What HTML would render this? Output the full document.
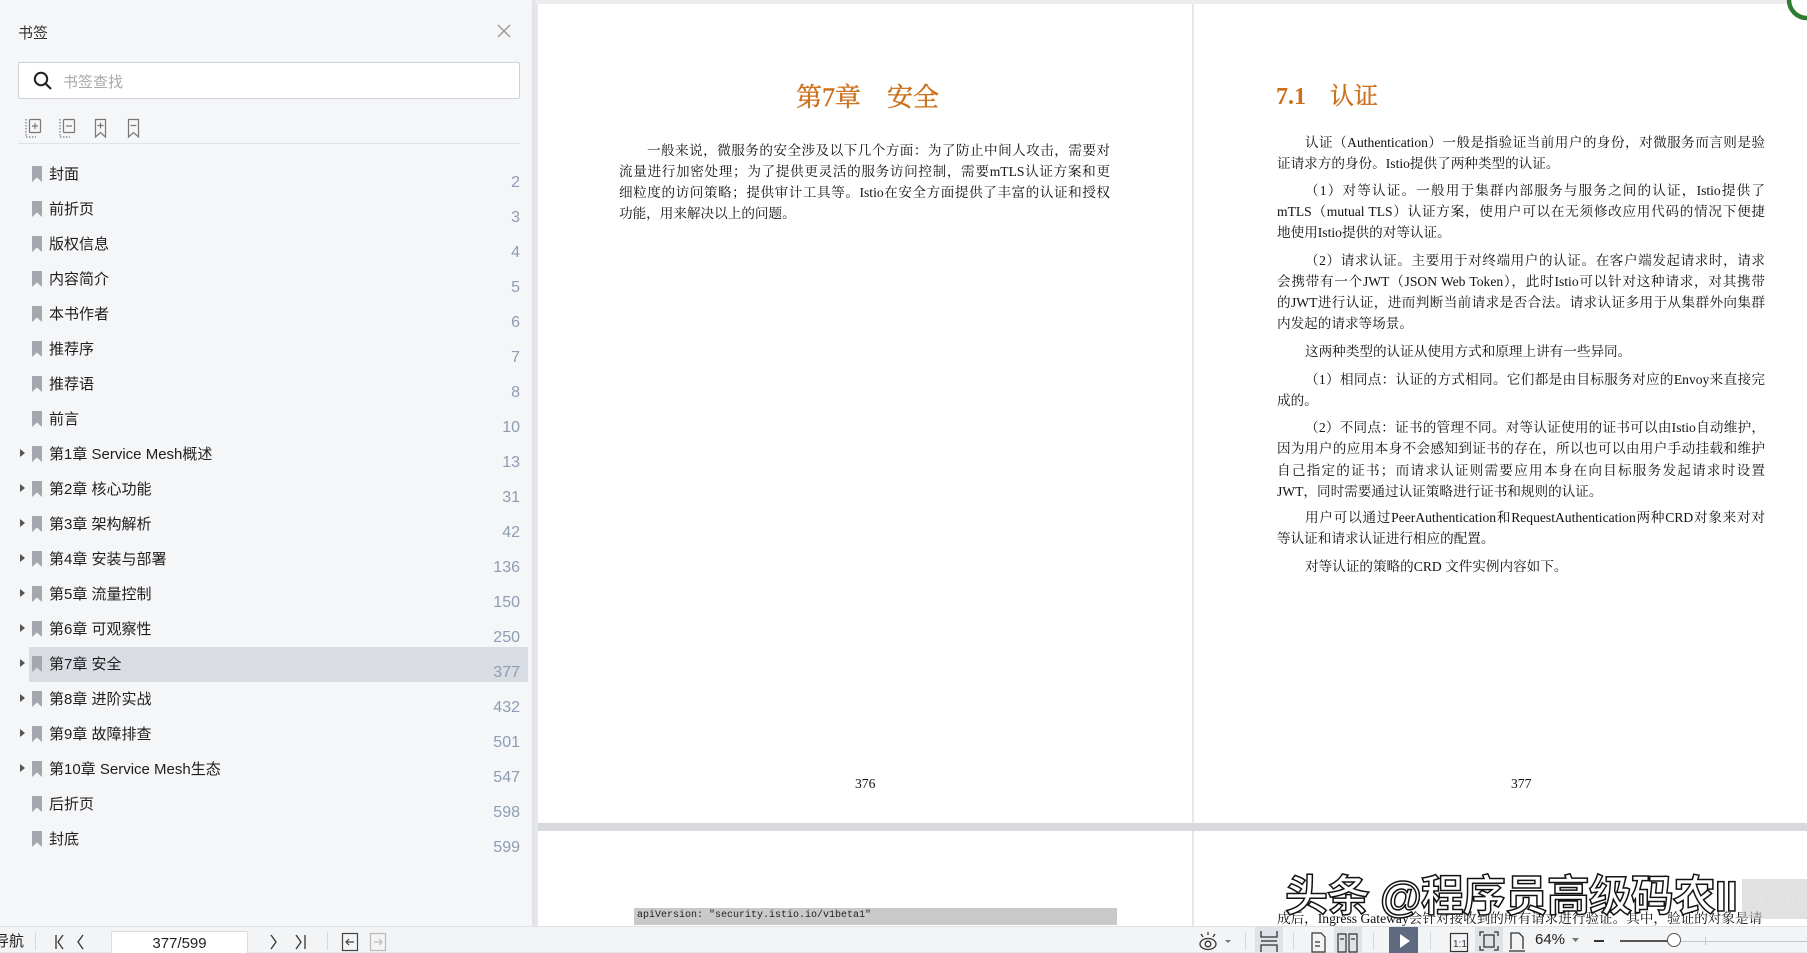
<!DOCTYPE html>
<html><head><meta charset="utf-8">
<style>
*{margin:0;padding:0;box-sizing:border-box}
body{width:1807px;height:952px;overflow:hidden;position:relative;background:#e6e7ea;font-family:"Liberation Sans","Noto Sans CJK SC",sans-serif}
.abs{position:absolute}
#side{left:0;top:0;width:535px;height:926px;background:#f5f6f8;border-right:3px solid #e2e3e6}
.row{position:absolute;left:0;width:530px;height:35px}
.row .t{position:absolute;left:49px;top:7px;font-size:15px;color:#1e1e1e;white-space:nowrap}
.row .n{position:absolute;right:10px;top:18px;font-size:16px;color:#8e9cb3}
.row svg.bm{position:absolute;left:32px;top:10px}
.row .ar{position:absolute;left:20px;top:13px;width:0;height:0;border-left:5px solid #555;border-top:4.5px solid transparent;border-bottom:4.5px solid transparent}
.page{background:#fff;position:absolute}
.ln{position:absolute;font-family:"Liberation Serif","Noto Serif CJK SC",serif;font-size:13.6px;color:#111;white-space:nowrap;line-height:20px;height:20px}
.j{text-align:justify;text-align-last:justify;white-space:normal;overflow:hidden}
#tb{left:0;top:926px;width:1807px;height:26px;background:#f3f4f6;border-top:1px solid #e0e1e4}
.sep{position:absolute;top:5px;width:1px;height:18px;background:#d8d9dc}
.ttl{font-family:'Liberation Serif','Noto Serif CJK SC',serif;color:#cc6f1a;white-space:nowrap;-webkit-text-stroke:0.4px #cc6f1a}
</style></head><body>

<div class="abs" style="left:0;top:0;width:1807px;height:4px;background:#ececee"></div>

<div id="side" class="abs">
  <div class="abs" style="left:18px;top:22px;font-size:15px;color:#333">书签</div>
  <svg class="abs" style="left:497px;top:24px" width="14" height="14"><path d="M1 1L13 13M13 1L1 13" stroke="#999" stroke-width="1.4"/></svg>
  <div class="abs" style="left:18px;top:62px;width:502px;height:37px;background:#fff;border:1px solid #cfd2d6;border-radius:2px"></div>
  <svg class="abs" style="left:33px;top:71px" width="20" height="20"><circle cx="8" cy="8" r="6.2" stroke="#222" stroke-width="2" fill="none"/><path d="M12.5 12.5L18 18" stroke="#222" stroke-width="2.2"/></svg>
  <div class="abs" style="left:63px;top:71px;font-size:15px;color:#aaa">书签查找</div>
  <svg class="abs" style="left:24px;top:117px" width="130" height="22">
    <g stroke="#777" fill="none" stroke-width="1.2">
      <path d="M2 2V20M2 20H12" stroke-dasharray="1.5 1.5"/>
      <rect x="5.5" y="2.5" width="11" height="13" rx="1"/><path d="M8 9H14M11 6V12"/>
      <path d="M36 2V20M36 20H46" stroke-dasharray="1.5 1.5"/>
      <rect x="39.5" y="2.5" width="11" height="13" rx="1"/><path d="M42 9H48"/>
      <path d="M71.5 2.5H81.5V20L76.5 15.5L71.5 20Z"/><path d="M73.5 8.5H79.5M76.5 5.5V11.5"/>
      <path d="M104.5 2.5H114.5V20L109.5 15.5L104.5 20Z"/><path d="M106.5 8.5H112.5"/>
    </g>
  </svg>
  <div class="abs" style="left:18px;top:143px;width:502px;height:1px;background:#e0e2e5"></div>
</div>

<div class="abs" style="left:29px;top:647px;width:499px;height:35px;background:#d9dde3"></div>
<div id="rows"></div>

<div class="page" style="left:538px;top:4px;width:654px;height:819px"></div>
<div class="page" style="left:1194px;top:4px;width:613px;height:819px"></div>
<div class="abs" style="left:538px;top:823px;width:1269px;height:8px;background:#d8d9dc"></div>
<div class="page" style="left:538px;top:831px;width:654px;height:95px"></div>
<div class="page" style="left:1194px;top:831px;width:613px;height:95px"></div>

<div class="abs ttl" style="left:796px;top:77px;font-size:26px">第7章&nbsp;&nbsp;&nbsp;&nbsp;安全</div>
<div class="abs ttl" style="left:1276px;top:76px;font-size:24px;font-weight:bold;-webkit-text-stroke:0">7.1&nbsp;&nbsp;&nbsp;&nbsp;<span style="font-weight:normal;-webkit-text-stroke:0.4px #cc6f1a">认证</span></div>

<div id="lines"></div>

<div class="ln" style="left:855px;top:774px">376</div>
<div class="ln" style="left:1511px;top:774px">377</div>

<div class="abs" style="left:634px;top:908px;width:483px;height:17px;background:#c9c9c9;font-family:'Liberation Mono',monospace;font-size:10px;color:#222;padding:2px 0 0 3px">apiVersion: "security.istio.io/v1beta1"</div>
<div class="ln" style="left:1277px;top:909px;width:490px;overflow:hidden">成后，Ingress Gateway会针对接收到的所有请求进行验证。其中，验证的对象是请</div>
<div class="abs" style="left:1742px;top:879px;width:65px;height:40px;background:rgba(200,200,200,.55);color:#e4e4e4;font-size:18px;padding:8px 0 0 12px">377页</div>
<div class="abs" style="left:1285px;top:872px;font-size:43px;font-weight:bold;color:#fff;white-space:nowrap;letter-spacing:-1px;-webkit-text-stroke:1.5px #111;font-family:'Liberation Sans','Noto Sans CJK SC',sans-serif;line-height:50px">头条 @程序员高级码农II</div>

<svg class="abs" style="left:1780px;top:0" width="27" height="22"><circle cx="27" cy="0" r="18" stroke="#2e7d32" stroke-width="4.5" fill="#fff"/></svg>

<div id="tb" class="abs">
  <div class="abs" style="left:-6px;top:3px;font-size:15px;color:#222">导航</div>
  <div class="sep" style="left:35px"></div>
  <svg class="abs" style="left:50px;top:6px" width="90" height="18"><g stroke="#333" stroke-width="1.3" fill="none"><path d="M6 2V16M13 2L8 9L13 16"/><path d="M33 2L28 9L33 16"/></g></svg>
  <div class="abs" style="left:111px;top:4px;width:137px;height:22px;background:#fff;border:1px solid #dcdde0;border-bottom:none;font-size:15px;color:#222;text-align:center;padding-top:3px">377/599</div>
  <svg class="abs" style="left:262px;top:6px" width="50" height="18"><g stroke="#333" stroke-width="1.3" fill="none"><path d="M9 2L14 9L9 16"/><path d="M34 2L39 9L34 16M43 2V16"/></g></svg>
  <div class="sep" style="left:327px"></div>
  <svg class="abs" style="left:340px;top:5px" width="50" height="20"><g fill="none" stroke-width="1.2"><rect x="2.5" y="1.5" width="15" height="17" stroke="#444"/><path d="M14 10H6M9 7L6 10L9 13" stroke="#444"/><rect x="30.5" y="1.5" width="15" height="17" stroke="#bbb"/><path d="M34 10H42M39 7L42 10L39 13" stroke="#bbb"/></g></svg>

  <svg class="abs" style="left:1196px;top:3px" width="40" height="22"><g stroke="#333" stroke-width="1.3" fill="none"><ellipse cx="12" cy="14" rx="8" ry="5.5"/><circle cx="12" cy="14" r="2.8"/><path d="M12 2V5M5 4L7 7M19 4L17 7"/></g><path d="M29 10H35L32 13Z" fill="#777"/></svg>
  <div class="sep" style="left:1245px"></div>
  <div class="abs" style="left:1255px;top:0;width:28px;height:26px;background:#dfe2e7"></div>
  <svg class="abs" style="left:1258px;top:3px" width="22" height="22"><g stroke="#333" stroke-width="1.3" fill="none"><path d="M3 1V7H19V1M3 22V15H19V22"/><path d="M3 11H19"/></g></svg>
  <div class="sep" style="left:1293px"></div>
  <svg class="abs" style="left:1308px;top:4px" width="22" height="22"><g stroke="#333" stroke-width="1.2" fill="none"><path d="M4 2H13L17 6V21H4Z"/><path d="M7 11H12M7 15H12"/></g></svg>
  <div class="abs" style="left:1334px;top:0;width:28px;height:26px;background:#dfe2e7"></div>
  <svg class="abs" style="left:1336px;top:4px" width="24" height="22"><g stroke="#333" stroke-width="1.2" fill="none"><path d="M2 3H10V21H2Z M13 3H21V21H13Z"/><path d="M4 8H8M15 8H19"/></g></svg>
  <div class="sep" style="left:1373px"></div>
  <div class="abs" style="left:1389px;top:0;width:29px;height:26px;background:#5d6a80"></div>
  <svg class="abs" style="left:1396px;top:5px" width="16" height="18"><path d="M4 2L14 9L4 16Z" fill="#fff"/></svg>
  <div class="sep" style="left:1430px"></div>
  <svg class="abs" style="left:1448px;top:4px" width="22" height="22"><g stroke="#333" stroke-width="1.2" fill="none"><rect x="2.5" y="2.5" width="17" height="18"/></g><text x="5" y="16" font-size="10" font-family="Liberation Sans" fill="#333">1:1</text></svg>
  <div class="abs" style="left:1475px;top:0;width:28px;height:26px;background:#dfe2e7"></div>
  <svg class="abs" style="left:1478px;top:3px" width="22" height="22"><g stroke="#333" stroke-width="1.3" fill="none"><path d="M2 6V2H6M16 2H20V6M20 16V20H16M6 20H2V16"/><rect x="6" y="5" width="10" height="12"/></g></svg>
  <svg class="abs" style="left:1507px;top:4px" width="22" height="22"><g stroke="#333" stroke-width="1.3" fill="none"><path d="M4 18V2H12L16 6V18"/><path d="M2 20H18"/></g></svg>
  <div class="abs" style="left:1535px;top:4px;font-size:15px;color:#222">64%</div>
  <svg class="abs" style="left:1571px;top:10px" width="10" height="6"><path d="M1 1H8L4.5 5Z" fill="#777"/></svg>
  <div class="abs" style="left:1594px;top:13px;width:10px;height:2px;background:#333"></div>
  <div class="abs" style="left:1620px;top:13px;width:55px;height:2px;background:#555"></div>
  <div class="abs" style="left:1675px;top:14px;width:132px;height:1px;background:#c4c6ca"></div>
  <div class="abs" style="left:1705px;top:10px;width:1px;height:8px;background:#c4c6ca"></div>
  <div class="abs" style="left:1667px;top:6px;width:14px;height:14px;border:1.5px solid #555;border-radius:50%;background:#fff"></div>
</div>

<script>
var items=[["封面",2,0],["前折页",3,0],["版权信息",4,0],["内容简介",5,0],["本书作者",6,0],["推荐序",7,0],["推荐语",8,0],["前言",10,0],
["第1章 Service Mesh概述",13,1],["第2章 核心功能",31,1],["第3章 架构解析",42,1],["第4章 安装与部署",136,1],["第5章 流量控制",150,1],["第6章 可观察性",250,1],["第7章 安全",377,1],["第8章 进阶实战",432,1],["第9章 故障排查",501,1],["第10章 Service Mesh生态",547,1],["后折页",598,0],["封底",599,0]];
var h="";
items.forEach(function(it,i){
 var top=156+i*35.0;
 h+='<div class="row" style="top:'+top+'px">'+(it[2]?'<div class="ar"></div>':'')+
 '<svg class="bm" width="10" height="16"><path d="M0 0H10V16L5 11.5L0 16Z" fill="#a3a7ae"/></svg><div class="t">'+it[0]+'</div><div class="n">'+it[1]+'</div></div>';
});
document.getElementById("rows").innerHTML=h;
var L=[
[619,151,1,"一般来说，微服务的安全涉及以下几个方面：为了防止中间人攻击，需要对"],
[619,172,0,"流量进行加密处理；为了提供更灵活的服务访问控制，需要mTLS认证方案和更"],
[619,193,0,"细粒度的访问策略；提供审计工具等。Istio在安全方面提供了丰富的认证和授权"],
[619,214,0,"功能，用来解决以上的问题。",1],
[1277,143,1,"认证（Authentication）一般是指验证当前用户的身份，对微服务而言则是验"],
[1277,164,0,"证请求方的身份。Istio提供了两种类型的认证。",1],
[1277,191,1,"（1）对等认证。一般用于集群内部服务与服务之间的认证，Istio提供了"],
[1277,212,0,"mTLS（mutual TLS）认证方案，使用户可以在无须修改应用代码的情况下便捷"],
[1277,233,0,"地使用Istio提供的对等认证。",1],
[1277,261,1,"（2）请求认证。主要用于对终端用户的认证。在客户端发起请求时，请求"],
[1277,282,0,"会携带有一个JWT（JSON Web Token），此时Istio可以针对这种请求，对其携带"],
[1277,303,0,"的JWT进行认证，进而判断当前请求是否合法。请求认证多用于从集群外向集群"],
[1277,324,0,"内发起的请求等场景。",1],
[1277,352,1,"这两种类型的认证从使用方式和原理上讲有一些异同。",1],
[1277,380,1,"（1）相同点：认证的方式相同。它们都是由目标服务对应的Envoy来直接完"],
[1277,401,0,"成的。",1],
[1277,428,1,"（2）不同点：证书的管理不同。对等认证使用的证书可以由Istio自动维护，"],
[1277,449,0,"因为用户的应用本身不会感知到证书的存在，所以也可以由用户手动挂载和维护"],
[1277,471,0,"自己指定的证书；而请求认证则需要应用本身在向目标服务发起请求时设置"],
[1277,492,0,"JWT，同时需要通过认证策略进行证书和规则的认证。",1],
[1277,518,1,"用户可以通过PeerAuthentication和RequestAuthentication两种CRD对象来对对"],
[1277,539,0,"等认证和请求认证进行相应的配置。",1],
[1277,567,1,"对等认证的策略的CRD 文件实例内容如下。",1]
];
var s="";
L.forEach(function(l){
 var w=(l[0]==619?491:488);
 var ind=l[2]?28:0;
 s+='<div class="ln'+(l[4]?'':' j')+'" style="left:'+(l[0]+ind)+'px;top:'+(l[1]-10)+'px;width:'+(w-ind)+'px">'+l[3]+'</div>';
});
document.getElementById("lines").innerHTML=s;
</script>
</body></html>
